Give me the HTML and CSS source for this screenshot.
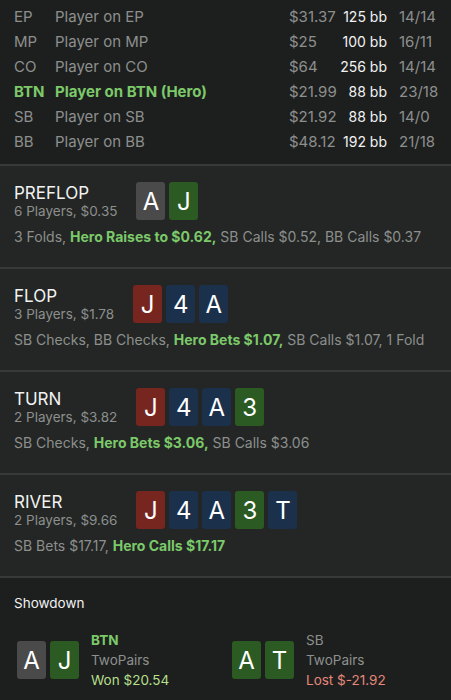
FILE: index.html
```html
<!DOCTYPE html>
<html lang="en">
<head>
  <meta charset="UTF-8">
  <meta name="viewport" content="width=device-width, initial-scale=1">
  <title>Hand History</title>
  <link rel="stylesheet" href="styles.css">
</head>
<body>
  <!-- Players -->
  <div class="players">
    <div class="row">
      <span class="pos">EP</span><span class="name">Player on EP</span>
      <span class="money">$31.37</span><span class="bb">125 bb</span><span class="stat">14/14</span>
    </div>
    <div class="row">
      <span class="pos">MP</span><span class="name">Player on MP</span>
      <span class="money">$25</span><span class="bb">100 bb</span><span class="stat">16/11</span>
    </div>
    <div class="row">
      <span class="pos">CO</span><span class="name">Player on CO</span>
      <span class="money">$64</span><span class="bb">256 bb</span><span class="stat">14/14</span>
    </div>
    <div class="row hero">
      <span class="pos">BTN</span><span class="name">Player on BTN (Hero)</span>
      <span class="money">$21.99</span><span class="bb">88 bb</span><span class="stat">23/18</span>
    </div>
    <div class="row">
      <span class="pos">SB</span><span class="name">Player on SB</span>
      <span class="money">$21.92</span><span class="bb">88 bb</span><span class="stat">14/0</span>
    </div>
    <div class="row">
      <span class="pos">BB</span><span class="name">Player on BB</span>
      <span class="money">$48.12</span><span class="bb">192 bb</span><span class="stat">21/18</span>
    </div>
  </div>

  <!-- Streets -->
  <div class="street">
    <div class="street-head">
      <div class="street-info">
        <div class="street-title">PREFLOP</div>
        <div class="street-sub">6 Players, $0.35</div>
      </div>
      <div class="cards">
        <span class="card grey">A</span><span class="card green">J</span>
      </div>
    </div>
    <div class="actions">3 Folds, <b>Hero Raises to $0.62,</b> SB Calls $0.52, BB Calls $0.37</div>
  </div>

  <div class="street">
    <div class="street-head">
      <div class="street-info">
        <div class="street-title">FLOP</div>
        <div class="street-sub">3 Players, $1.78</div>
      </div>
      <div class="cards">
        <span class="card red">J</span><span class="card blue">4</span><span class="card blue">A</span>
      </div>
    </div>
    <div class="actions">SB Checks, BB Checks, <b>Hero Bets $1.07,</b> SB Calls $1.07, 1 Fold</div>
  </div>

  <div class="street">
    <div class="street-head">
      <div class="street-info">
        <div class="street-title">TURN</div>
        <div class="street-sub">2 Players, $3.82</div>
      </div>
      <div class="cards">
        <span class="card red">J</span><span class="card blue">4</span><span class="card blue">A</span><span class="card green">3</span>
      </div>
    </div>
    <div class="actions">SB Checks, <b>Hero Bets $3.06,</b> SB Calls $3.06</div>
  </div>

  <div class="street">
    <div class="street-head">
      <div class="street-info">
        <div class="street-title">RIVER</div>
        <div class="street-sub">2 Players, $9.66</div>
      </div>
      <div class="cards">
        <span class="card red">J</span><span class="card blue">4</span><span class="card blue">A</span><span class="card green">3</span><span class="card blue">T</span>
      </div>
    </div>
    <div class="actions">SB Bets $17.17, <b>Hero Calls $17.17</b></div>
  </div>

  <!-- Showdown -->
  <div class="showdown">
    <div class="showdown-title">Showdown</div>
    <div class="showdown-players">
      <div class="sd-player">
        <div class="cards">
          <span class="card grey">A</span><span class="card green">J</span>
        </div>
        <div class="sd-info">
          <div class="sd-pos hero-pos">BTN</div>
          <div class="sd-hand">TwoPairs</div>
          <div class="won">Won $20.54</div>
        </div>
      </div>
      <div class="sd-player">
        <div class="cards">
          <span class="card green">A</span><span class="card green">T</span>
        </div>
        <div class="sd-info">
          <div class="sd-pos">SB</div>
          <div class="sd-hand">TwoPairs</div>
          <div class="lost">Lost $-21.92</div>
        </div>
      </div>
    </div>
  </div>
</body>
</html>
```

FILE: styles.css
```css
* {
  margin: 0;
  padding: 0;
  box-sizing: border-box;
}

body {
  font-family: Inter, "Noto Sans", sans-serif;
  background-color: #1d1f1e;
  color: #8d8f8e;
  width: 451px;
}

/* Players table */
.players {
  padding: 4px 0 10px 14px;
}

.players .row {
  display: grid;
  grid-template-columns: 41px 234px 40px 58px auto;
  height: 25px;
  align-items: center;
  font-size: 15px;
  white-space: nowrap;
}

.players .bb {
  color: #f2f2f2;
  font-size: 14px;
  text-align: right;
}

.players .stat {
  padding-left: 12px;
}

.players .hero .pos,
.players .hero .name {
  color: #7cc96a;
  font-weight: bold;
}

/* Streets */
.street {
  background-color: #232624;
  border-top: 2px solid #383a39;
  height: 103px;
  padding: 16px 14px 0 14px;
}

.street-head {
  display: flex;
  align-items: center;
  gap: 19px;
}

.street-title {
  color: #f2f2f2;
  font-size: 17px;
  line-height: 20px;
}

.street-sub {
  font-size: 13.5px;
  line-height: 16px;
}

.actions {
  margin-top: 9px;
  font-size: 14px;
  line-height: 16px;
}

.actions b {
  color: #7cc96a;
}

/* Cards */
.cards {
  display: flex;
  gap: 4px;
}

.card {
  width: 29px;
  height: 38px;
  border-radius: 3px;
  color: #fff;
  font-size: 24px;
  display: flex;
  align-items: center;
  justify-content: center;
}

.card.grey { background-color: #4a4a4a; }
.card.green { background-color: #2c5a23; }
.card.red { background-color: #76251f; }
.card.blue { background-color: #1b304a; }

/* Showdown */
.showdown {
  border-top: 2px solid #383a39;
  padding: 16px 14px 0 14px;
  height: 123px;
}

.showdown-title {
  color: #f2f2f2;
  font-size: 13.5px;
  line-height: 18px;
}

.showdown-players {
  display: grid;
  grid-template-columns: 215px auto;
  margin-top: 18px;
  padding-left: 3px;
}

.sd-player {
  display: flex;
  align-items: center;
  gap: 12px;
}

.sd-info {
  font-size: 13.5px;
  line-height: 20px;
}

.hero-pos {
  color: #7cc96a;
  font-weight: bold;
}

.won {
  color: #b6df8c;
}

.lost {
  color: #e5877a;
}
```
